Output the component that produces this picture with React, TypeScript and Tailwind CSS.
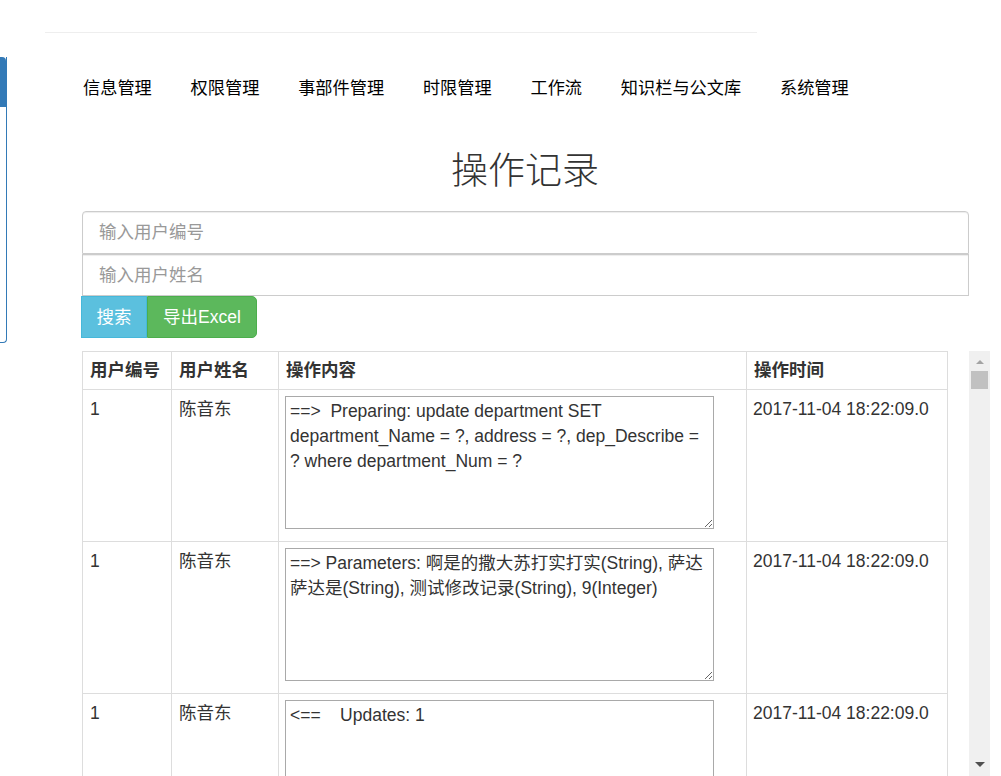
const navItems = ["信息管理", "权限管理", "事部件管理", "时限管理", "工作流", "知识栏与公文库", "系统管理"];

const rows = [
  {
    id: "1",
    name: "陈音东",
    content: "==>  Preparing: update department SET department_Name = ?, address = ?, dep_Describe = ? where department_Num = ?",
    time: "2017-11-04 18:22:09.0",
  },
  {
    id: "1",
    name: "陈音东",
    content: "==> Parameters: 啊是的撒大苏打实打实(String), 萨达萨达是(String), 测试修改记录(String), 9(Integer)",
    time: "2017-11-04 18:22:09.0",
  },
  {
    id: "1",
    name: "陈音东",
    content: "<==    Updates: 1",
    time: "2017-11-04 18:22:09.0",
  },
];

const App = () => {
  return (
    <div
      className="h-[776px] overflow-hidden bg-white pt-[32px] text-[#333]"
      style={{ fontFamily: '"Liberation Sans", "Noto Sans CJK SC", sans-serif' }}
    >
      <div className="ml-[45px] w-[712px] border-t border-[#eee]"></div>
      <div className="mt-[24px] flex items-start">
        {/* side panel, mostly off screen */}
        <div className="flex h-[286px] w-[7px] shrink-0 flex-col rounded-br-[4px] border-r border-b border-[#337ab7]">
          <div className="h-[50px] rounded-tr-[4px] bg-[#337ab7]"></div>
        </div>

        <div className="ml-[75px] w-[907px]">
          <nav className="flex gap-[38.8px] pt-[19px] pl-px text-[17.2px] leading-[24px] text-black">
            {navItems.map((item) => (
              <a key={item} className="cursor-pointer">
                {item}
              </a>
            ))}
          </nav>

          <h2 className="mt-[49px] w-[886px] text-center text-[37px] leading-[45px] font-light text-[#333]">
            操作记录
          </h2>

          <div className="mt-[17px] w-[887px]">
            <input
              className="block h-[43px] w-full rounded-t-[4px] border border-[#ccc] px-[16px] text-[17.5px] placeholder:text-[#999] shadow-[inset_0_1px_1px_rgba(0,0,0,0.075)] outline-none"
              placeholder="输入用户编号"
            />
            <input
              className="block h-[42px] w-full border border-[#ccc] px-[16px] text-[17.5px] placeholder:text-[#999] shadow-[inset_0_1px_1px_rgba(0,0,0,0.075)] outline-none"
              placeholder="输入用户姓名"
            />
          </div>
          <div className="-ml-px flex">
            <button className="h-[42px] w-[66px] border border-[#46b8da] bg-[#5bc0de] text-[17.5px] text-white">
              搜索
            </button>
            <button className="h-[42px] w-[110px] rounded-r-[5px] border border-[#4cae4c] bg-[#5cb85c] text-[17.5px] text-white">
              导出Excel
            </button>
          </div>

          <div className="mt-[13px] flex items-start">
            <table className="w-[865px] table-fixed border-collapse text-[17.5px] leading-[25px]">
              <colgroup>
                <col className="w-[89px]" />
                <col className="w-[107px]" />
                <col className="w-[468px]" />
                <col className="w-[201px]" />
              </colgroup>
              <thead>
                <tr className="font-bold">
                  <th className="border border-[#ddd] px-[7px] py-[6px] text-left align-top">用户编号</th>
                  <th className="border border-[#ddd] px-[7px] py-[6px] text-left align-top">用户姓名</th>
                  <th className="border border-[#ddd] px-[7px] py-[6px] text-left align-top">操作内容</th>
                  <th className="border border-[#ddd] px-[7px] py-[6px] text-left align-top">操作时间</th>
                </tr>
              </thead>
              <tbody>
                {rows.map((row, i) => (
                  <tr key={i}>
                    <td className="border border-[#ddd] px-[7px] pt-[7px] pb-[7px] align-top">{row.id}</td>
                    <td className="border border-[#ddd] px-[7px] pt-[7px] pb-[7px] align-top">{row.name}</td>
                    <td className="border border-[#ddd] px-[6px] pt-[6px] pb-[7px] align-top">
                      <textarea
                        className="mb-[5px] block h-[133px] w-[429px] border border-[#a9a9a9] px-[4px] py-[2px] text-[17.5px] leading-[25px] text-[#333] outline-none"
                        defaultValue={row.content}
                      />
                    </td>
                    <td className="border border-[#ddd] px-[6px] pt-[7px] pb-[7px] align-top">{row.time}</td>
                  </tr>
                ))}
              </tbody>
            </table>

            {/* scrollbar */}
            <div className="ml-[21px] flex h-[425px] w-[21px] shrink-0 flex-col items-center bg-[#f0f0f0]">
              <div className="mt-[9px] h-0 w-0 border-x-[4px] border-b-[4px] border-x-transparent border-b-[#a3a3a3]"></div>
              <div className="mt-[7px] h-[18px] w-[17px] bg-[#c1c1c1]"></div>
              <div className="mt-auto mb-[9px] h-0 w-0 border-x-[5px] border-t-[5px] border-x-transparent border-t-[#505050]"></div>
            </div>
          </div>
        </div>
      </div>
    </div>
  );
};

export default App;
